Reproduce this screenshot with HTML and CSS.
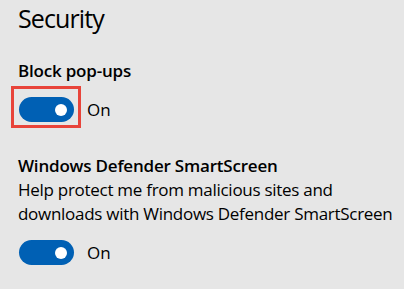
FILE: index.html
```html
<!DOCTYPE html>
<html>
<head>
  <title>Security</title>
  <link rel="stylesheet" href="styles.css">
</head>
<body>
  <h1 class="title">Security</h1>

  <section class="setting">
    <div class="setting-label">Block pop-ups</div>
    <div class="toggle-row">
      <span class="highlight"></span>
      <span class="toggle on"><span class="knob"></span></span>
      <span class="toggle-state">On</span>
    </div>
  </section>

  <section class="setting setting-second">
    <div class="setting-label">Windows Defender SmartScreen</div>
    <p class="setting-desc">Help protect me from malicious sites and<br>downloads with Windows Defender SmartScreen</p>
    <div class="toggle-row">
      <span class="toggle on"><span class="knob"></span></span>
      <span class="toggle-state">On</span>
    </div>
  </section>
</body>
</html>
```

FILE: styles.css
```css
/* Settings panel */

body {
  margin: 0;
  padding: 0 0 0 18px;
  background-color: #e6e6e6;
  color: #000;
  font-family: "Open Sans", "Noto Sans", sans-serif;
}

.title {
  margin: 0;
  font-size: 25px;
  font-weight: 400;
  line-height: 36px;
  letter-spacing: -0.9px;
}

.setting {
  margin-top: 23px;
}

.setting-second {
  margin-top: 32px;
}

.setting-label {
  font-size: 17px;
  font-weight: 600;
  line-height: 24px;
  letter-spacing: -0.2px;
}

.setting-desc {
  margin: 0;
  font-size: 17px;
  line-height: 24px;
  letter-spacing: -0.28px;
  white-space: nowrap;
}

.toggle-row {
  position: relative;
  display: flex;
  align-items: center;
  margin-top: 14px;
  padding-left: 1px;
  height: 25px;
}

.toggle {
  display: flex;
  align-items: center;
  justify-content: flex-end;
  width: 55px;
  height: 25px;
  border-radius: 13px;
  background-color: #0060b4;
}

.toggle .knob {
  width: 12px;
  height: 12px;
  margin-right: 7px;
  border-radius: 50%;
  background-color: #fff;
}

.toggle-state {
  margin-left: 13px;
  font-size: 17px;
  line-height: 25px;
}

/* red annotation box drawn over the first toggle */
.highlight {
  position: absolute;
  left: -7px;
  top: -11px;
  width: 64px;
  height: 36px;
  border: 3px solid #e8443a;
}
```
